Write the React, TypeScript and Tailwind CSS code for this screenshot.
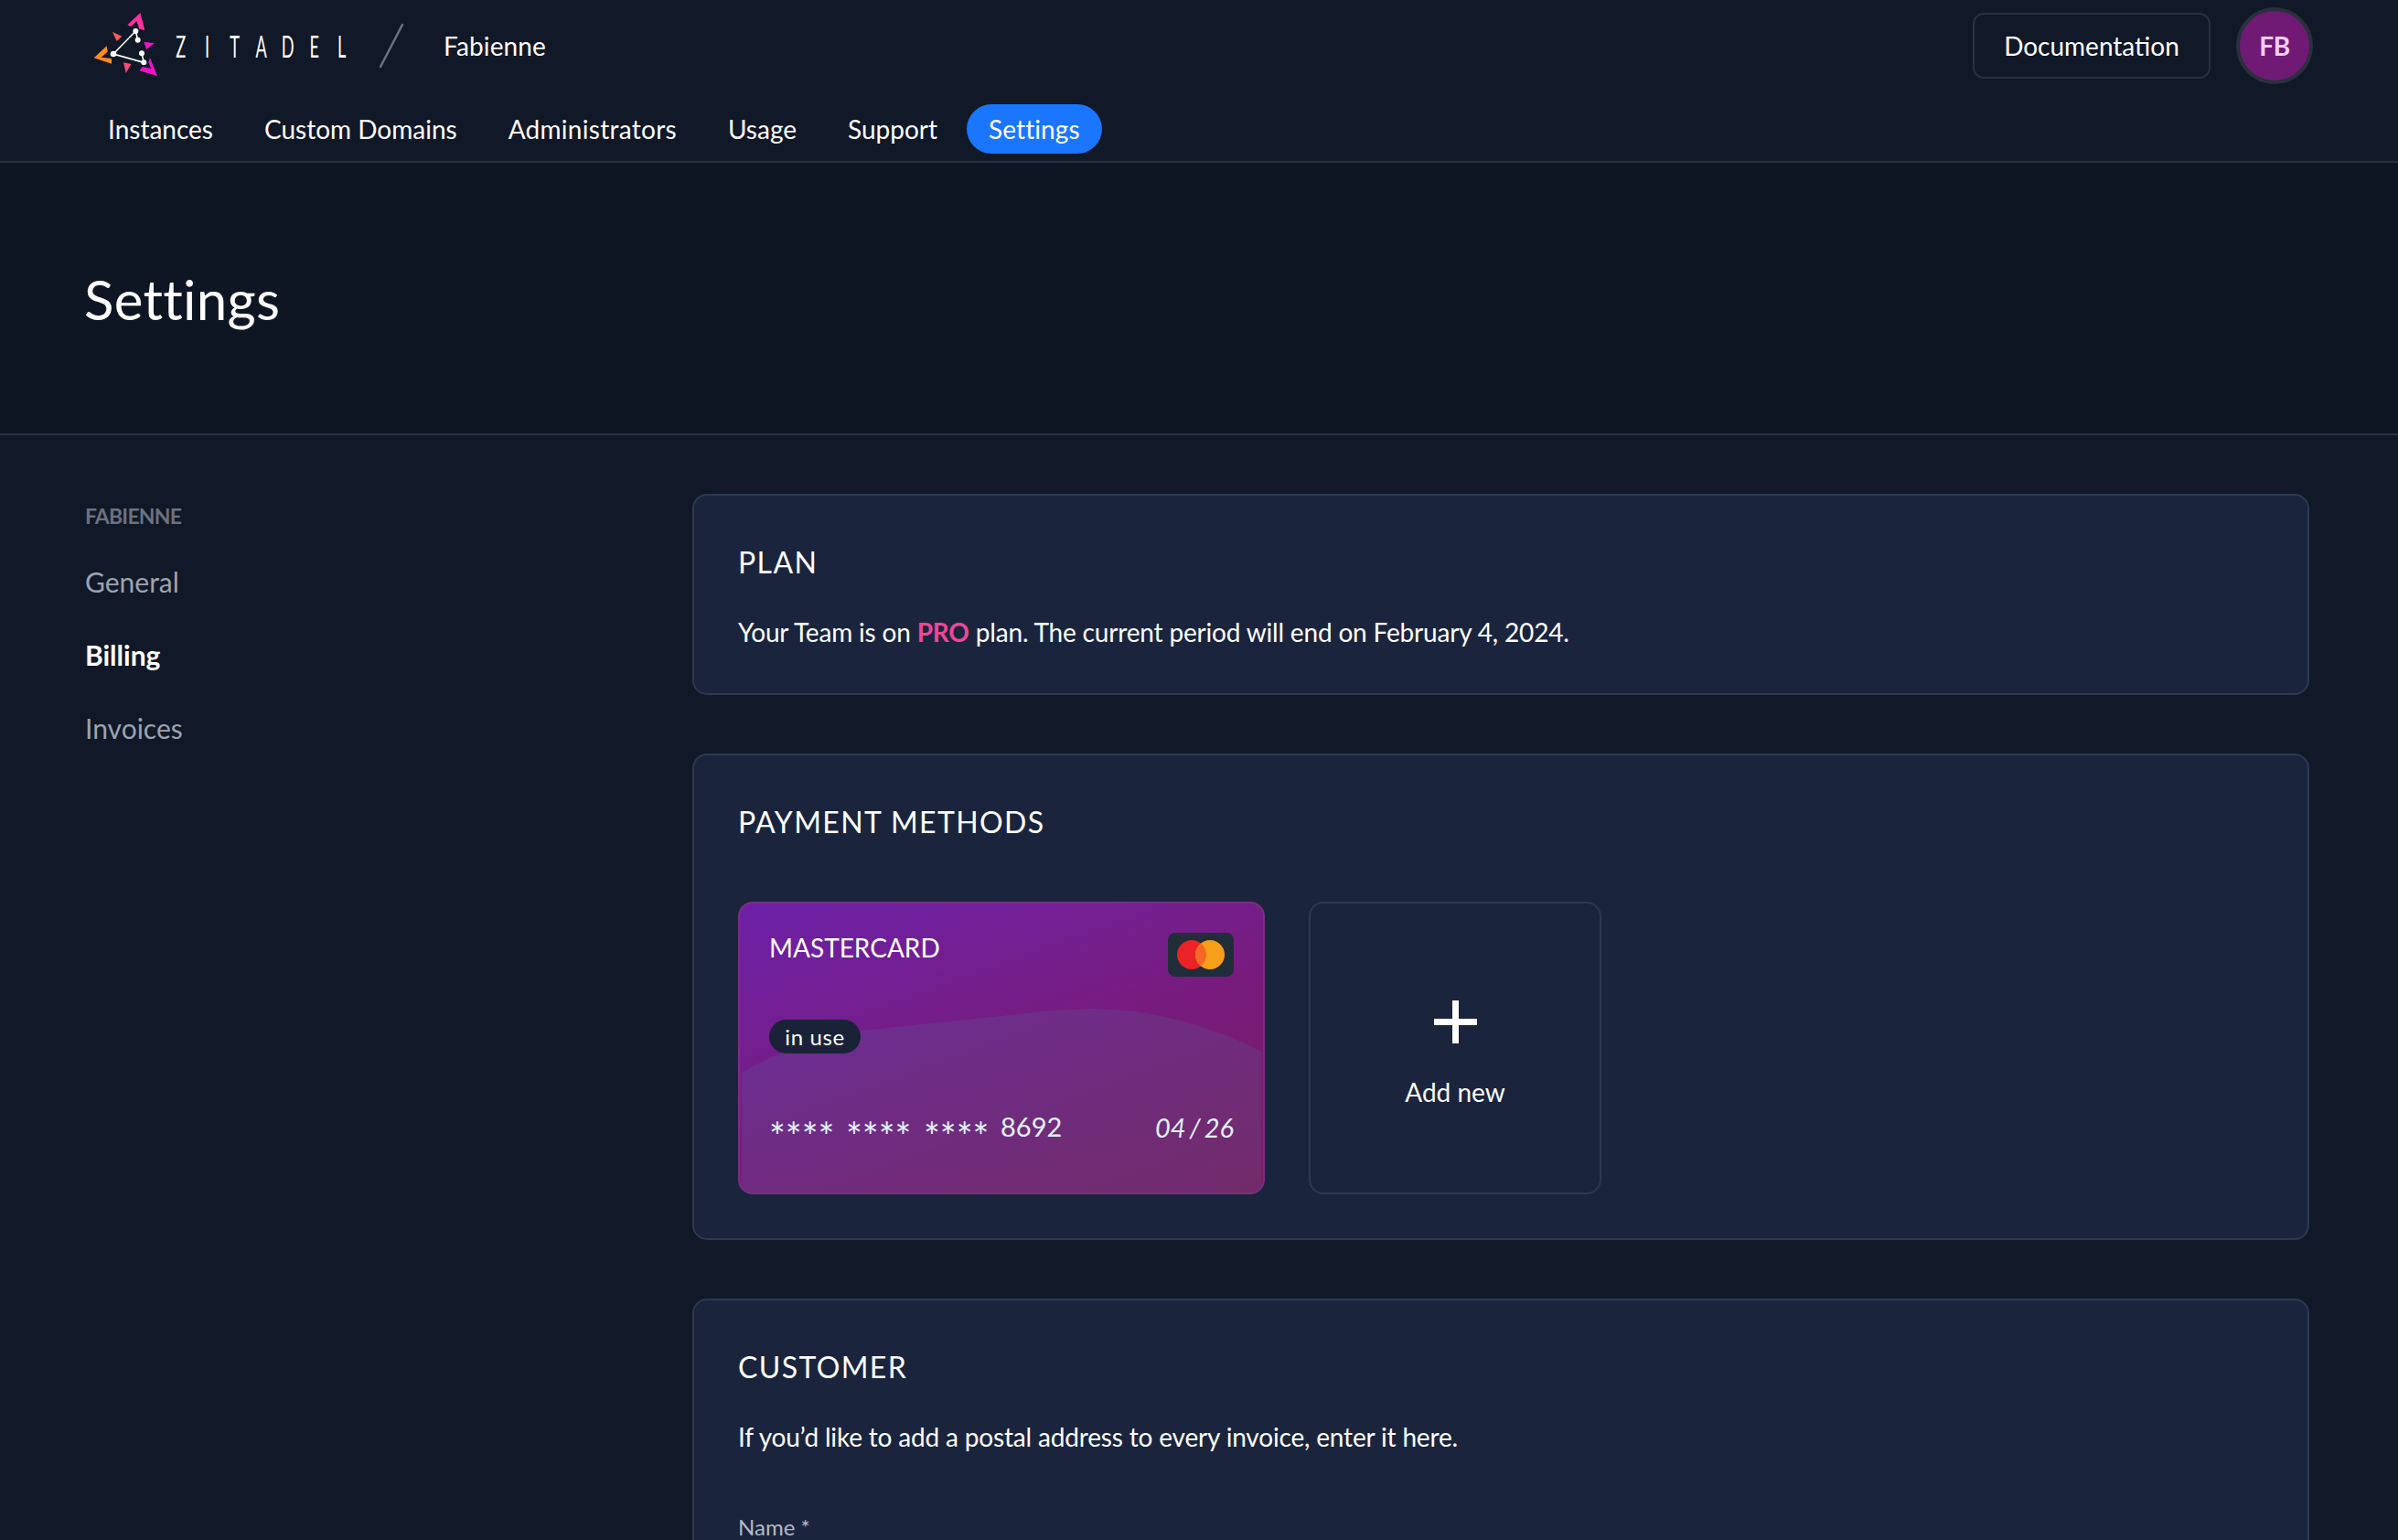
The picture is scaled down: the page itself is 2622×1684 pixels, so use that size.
const navItems = ['Instances', 'Custom Domains', 'Administrators', 'Usage', 'Support'];
const wordmark = ['Z', 'I', 'T', 'A', 'D', 'E', 'L'];

const Logo = () => (
  <svg width="100" height="80" viewBox="0 0 300 240" className="shrink-0">
    <path d="M148 55 190 15 205 72 187 68 178 42 160 60Z" fill="#ff2fa0" />
    <path d="M38 163 80 124 83 143 62 161 96 165 96 182Z" fill="#ff8a1e" />
    <path d="M222 163 246 222 187 205 198 192 226 198 217 178Z" fill="#f012c8" />
    <path d="M99 78 130 92 113 108Z" fill="#ff5a5a" />
    <path d="M202 110 237 115 210 135Z" fill="#f012c8" />
    <path d="M135 178 160 183 143 213Z" fill="#ff4a78" />
    <path d="M175 75 102 150 202 178M175 75 182 104M195 148 202 178" stroke="#fff" strokeWidth="5" fill="none" />
    <circle cx="175" cy="75" r="9" fill="#fff" />
    <circle cx="182" cy="104" r="9" fill="#fff" />
    <circle cx="102" cy="150" r="10" fill="#fff" />
    <circle cx="195" cy="148" r="9" fill="#fff" />
    <circle cx="202" cy="178" r="9" fill="#fff" />
  </svg>
);

const Header = () => (
  <header className="h-[178px] border-b-2 border-[#2a303d] bg-[#111827] pl-[94px] pr-[93px]">
    <div className="flex h-[100px] items-center justify-between">
      <div className="flex items-center">
        <div className="ml-[-4px] mt-[-2px]">
          <Logo />
        </div>
        <div className="ml-[-7px] flex text-[33px] leading-none text-white">
          {wordmark.map((letter) => (
            <span key={letter} className="w-[29.3px] scale-x-[0.55] text-center">
              {letter}
            </span>
          ))}
        </div>
        <svg width="28" height="50" viewBox="0 0 28 50" className="ml-[26px]">
          <path d="M2 48 26 2" stroke="#6b7280" strokeWidth="2.5" strokeLinecap="round" />
        </svg>
        <span className="ml-[43px] text-[28px] tracking-[0.1px] text-white">Fabienne</span>
      </div>
      <div className="flex items-center gap-[28px]">
        <button className="flex h-[72px] w-[260px] items-center justify-center rounded-xl border-2 border-[#2a303d] text-[28px] text-white">
          Documentation
        </button>
        <div className="flex h-[84px] w-[84px] items-center justify-center rounded-full border-4 border-[#2a303d] bg-[#701a75] text-[28px] font-bold tracking-[-0.5px] text-[#f5d0fe]">
          FB
        </div>
      </div>
    </div>
    <nav className="mt-[14px] flex items-center gap-2 text-[28px] text-white">
      {navItems.map((item) => (
        <a key={item} className={`flex h-[54px] items-center px-6 ${item === 'Administrators' ? 'tracking-[0.28px]' : ''}`}>
          {item}
        </a>
      ))}
      <a className="flex h-[54px] items-center rounded-full bg-[#1a76ff] px-6 tracking-[0.1px]">Settings</a>
    </nav>
  </header>
);

const Panel = ({ children, className }: { children: React.ReactNode; className: string }) => (
  <section className={`rounded-2xl border-2 border-[#2c3a50] bg-[#1a253d] px-[48px] ${className}`}>{children}</section>
);

const PanelTitle = ({ children }: { children: React.ReactNode }) => (
  <h2 className="text-[32px] uppercase leading-[40px] tracking-[1.4px] text-white">{children}</h2>
);

const Stars = ({ width }: { width: string }) => (
  <span className={`${width} translate-y-[10px] text-[42px] leading-none`}>****</span>
);

const CreditCard = () => (
  <div className="relative h-[320px] w-[576px] overflow-hidden rounded-2xl border-2 border-[#7b3080] bg-[linear-gradient(160deg,#6d21a8_0%,#771c80_50%,#7a1a5e_100%)]">
    <svg viewBox="0 0 576 320" className="absolute inset-0 h-full w-full">
      <path
        d="M0 187C40 165 90 146 131 141L340 119C370 116 400 115 430 119 480 125 530 140 576 164V320H0Z"
        fill="#4f78a0"
        fillOpacity="0.18"
      />
    </svg>
    <div className="relative flex h-full flex-col px-[32px]">
      <div className="mt-[32px] flex items-start justify-between">
        <span className="mt-[-2px] text-[28px] leading-[36px] text-white">MASTERCARD</span>
        <div className="relative h-[48px] w-[72px] rounded-lg bg-[#222d3a]">
          <svg width="72" height="48" viewBox="0 0 72 48">
            <circle cx="26" cy="24" r="16" fill="#eb2226" />
            <circle cx="46" cy="24" r="16" fill="#f79e1b" />
            <path d="M36 11.5a16 16 0 0 1 0 25 16 16 0 0 1 0-25Z" fill="#f46a25" />
          </svg>
        </div>
      </div>
      <span className="mt-[47px] flex h-[37px] w-[100px] items-center justify-center rounded-full bg-[#1a2238] text-[24px] tracking-[0.6px] text-white">
        in use
      </span>
      <div className="mt-[59px] flex items-center justify-between text-[29px] leading-[36px] text-[#e0f2fe]">
        <div className="flex items-center">
          <Stars width="w-[84px]" />
          <Stars width="w-[85px]" />
          <Stars width="w-[84px]" />
          <span>8692</span>
        </div>
        <span className="translate-y-[1px] italic">
          04<span className="mx-[4px]">/</span>26
        </span>
      </div>
    </div>
  </div>
);

export default function App() {
  return (
    <div className="h-[1684px] overflow-hidden bg-[#111827] font-['Lato',sans-serif]">
      <Header />
      <div className="flex h-[298px] items-center border-b-2 border-[#2a303d] bg-[#0f1623] px-[92px]">
        <h1 className="mb-[-2px] text-[60px] leading-none tracking-[0.3px] text-white [font-variant-ligatures:none]">
          Settings
        </h1>
      </div>
      <main className="flex pl-[93px] pr-[94px] pt-[64px]">
        <aside className="w-[664px]">
          <div className="mt-[9px] text-[23px] font-bold leading-[30px] tracking-[-0.8px] text-[#6b7280]">FABIENNE</div>
          <ul className="mt-[17px] flex flex-col text-[30px] leading-[80px] text-[#9ca3af]">
            <li>General</li>
            <li className="font-bold text-white">Billing</li>
            <li>Invoices</li>
          </ul>
        </aside>
        <div className="flex w-[1768px] flex-col gap-[64px]">
          <Panel className="h-[220px] pt-[53px]">
            <PanelTitle>Plan</PanelTitle>
            <p className="mt-[37px] text-[28px] leading-[38px] tracking-[-0.18px] text-white">
              Your Team is on <span className="font-bold text-[#ec4899]">PRO</span> plan. The current period will end
              on February 4, 2024.
            </p>
          </Panel>
          <Panel className="h-[532px] pt-[53px]">
            <PanelTitle>Payment methods</PanelTitle>
            <div className="mt-[67px] flex gap-[48px]">
              <CreditCard />
              <div className="flex h-[320px] w-[320px] flex-col items-center rounded-2xl border-2 border-[#2c3a50]">
                <svg width="47" height="47" viewBox="0 0 47 47" className="mt-[106px]">
                  <path d="M23.5 0V47M0 23.5H47" stroke="#fff" strokeWidth="7" />
                </svg>
                <span className="mt-[35px] text-[28px] leading-[36px] text-white">Add new</span>
              </div>
            </div>
          </Panel>
          <Panel className="h-[600px] pt-[53px]">
            <PanelTitle>Customer</PanelTitle>
            <p className="mt-[37px] text-[28px] leading-[38px] tracking-[-0.17px] text-white">
              If you’d like to add a postal address to every invoice, enter it here.
            </p>
            <label className="mt-[64px] block text-[24px] leading-[32px] text-[#b4bac4]">Name *</label>
          </Panel>
        </div>
      </main>
    </div>
  );
}
